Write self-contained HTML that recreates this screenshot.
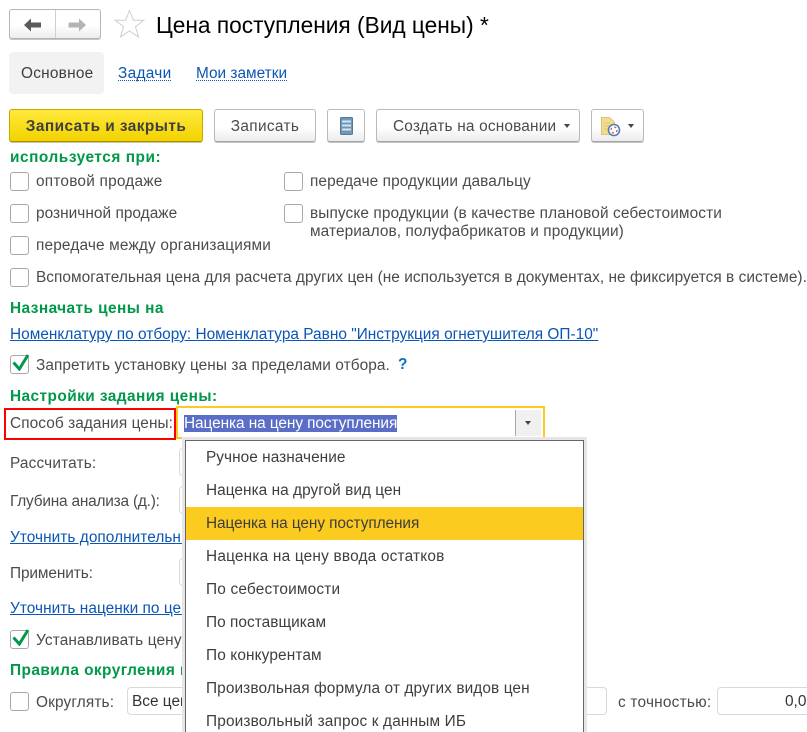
<!DOCTYPE html>
<html lang="ru"><head><meta charset="utf-8"><title>Цена поступления</title>
<style>
html{margin:0;padding:0;background:#fff;width:807px;height:732px;overflow:hidden}
body{margin:0;padding:0;background:#fff;width:807px;height:732px;overflow:hidden;position:relative;font-family:"Liberation Sans",sans-serif;font-size:15.4px;color:#4b4b4b}
.t,.g,.a,.cb,.btn,.f,.m{position:absolute;box-sizing:border-box}
.t{white-space:nowrap;line-height:18px}
.g{white-space:nowrap;line-height:18px;font-weight:bold;color:#00984a;left:10px;letter-spacing:.44px}
.a{white-space:nowrap;line-height:18px;color:#0b55b5;text-decoration:underline}
.cb{width:19px;height:19px;left:10px;border:1px solid #a8a8a8;border-radius:3px;background:#fff}
.btn{height:33px;top:109px;border:1px solid #b9b9b9;border-bottom-color:#a4a4a4;border-radius:3px;background:linear-gradient(#fff,#fff 55%,#ececec);box-shadow:0 1px 0 #c4c4c4;line-height:33px;text-align:center;white-space:nowrap}
.f{border:1px solid #d9d9d9;border-radius:4px;background:#fff;height:28px}
.m{left:186px;width:397px;height:33px;line-height:34px;padding-left:20px;color:#3e3e3e;white-space:nowrap}
.arr{position:absolute;width:0;height:0;border-left:3.5px solid transparent;border-right:3.5px solid transparent;border-top:4px solid #444}
</style></head><body>

<!-- nav -->
<div class="btn" style="left:9px;top:9px;width:92px;height:30px;border-color:#b5b5b5">
<div style="position:absolute;left:45px;top:0;width:1px;height:28px;background:#cfcfcf"></div>
<svg style="position:absolute;left:13px;top:8px" width="20" height="14" viewBox="0 0 20 14"><path d="M1 7L8 .5V4.5H18V9.5H8V13.5Z" fill="#5a5a5a"/></svg>
<svg style="position:absolute;left:57px;top:8px" width="20" height="14" viewBox="0 0 20 14"><path d="M19 7L12 .5V4.5H1.5V9.5H12V13.5Z" fill="#b4b4b4"/></svg>
</div>
<svg style="position:absolute;left:114px;top:9px" width="32" height="30" viewBox="0 0 32 30"><path d="M15.5 1.5L19.4 11.3H29.8L21.4 17.8L24.6 28L15.5 21.9L6.4 28L9.6 17.8L1.2 11.3H11.6Z" fill="#fff" stroke="#ccd0d4" stroke-width="1"/></svg>
<div class="t" style="left:156px;top:10px;font-size:22.7px;line-height:30px;color:#000">Цена поступления (Вид цены) *</div>

<!-- tabs -->
<div style="position:absolute;left:9px;top:52px;width:95px;height:42px;background:#f2f2f2;border-radius:4px"></div>
<div class="t" style="left:21px;top:65px;color:#3e3e3e;letter-spacing:.24px">Основное</div>
<div class="t" style="left:118px;top:65px;color:#0b55b5;border-bottom:1px dotted #0b55b5;line-height:17px;height:16px;letter-spacing:.3px">Задачи</div>
<div class="t" style="left:196px;top:65px;color:#0b55b5;border-bottom:1px dotted #0b55b5;line-height:17px;height:16px;letter-spacing:0">Мои заметки</div>

<!-- toolbar -->
<div class="btn" style="left:9px;width:194px;background:linear-gradient(#ffe93c,#f2d300);border-color:#c4a800;border-bottom-color:#a89000;font-weight:bold;color:#3f3f3f;box-shadow:0 1px 0 #c9c9a0;letter-spacing:.44px">Записать и закрыть</div>
<div class="btn" style="left:214px;width:102px;letter-spacing:.35px">Записать</div>
<div class="btn" style="left:327px;width:38px">
<svg style="position:absolute;left:12px;top:7px" width="13" height="18" viewBox="0 0 13 18"><rect x="0.5" y="0.5" width="12" height="17" rx="1" fill="#6f97b8" stroke="#4f7a9e"/><path d="M2 4.5H11M2 8.5H11M2 12.5H11" stroke="#d7e5ef" stroke-width="2"/></svg>
</div>
<div class="btn" style="left:376px;width:204px;text-align:left;padding-left:16px;letter-spacing:.18px">Создать на основании<span class="arr" style="left:187px;top:14px"></span></div>
<div class="btn" style="left:591px;width:53px">
<svg style="position:absolute;left:9px;top:7px" width="22" height="20" viewBox="0 0 22 20"><path d="M.5 .5H8.5L13.5 5.5V17.5H.5Z" fill="#f2dc8e" stroke="#dcc272"/><path d="M2.5 6H9M2.5 9H9M2.5 12H7" stroke="#e2c677"/><circle cx="13" cy="13" r="5.5" fill="#fff" stroke="#4d7fb3" stroke-width="1.6"/><circle cx="13" cy="13" r="3" fill="none" stroke="#d9534f" stroke-width="1.4" stroke-dasharray="2 2.7"/></svg>
<span class="arr" style="left:36px;top:14px"></span></div>

<!-- uses -->
<div class="g" style="top:149px;letter-spacing:.54px">используется при:</div>
<div class="cb" style="top:172px"></div><div class="t" style="left:36px;top:173px;letter-spacing:.22px">оптовой продаже</div>
<div class="cb" style="top:204px"></div><div class="t" style="left:36px;top:205px;letter-spacing:.04px">розничной продаже</div>
<div class="cb" style="top:236px"></div><div class="t" style="left:36px;top:237px;letter-spacing:.16px">передаче между организациями</div>
<div class="cb" style="top:172px;left:284px"></div><div class="t" style="left:310px;top:173px;letter-spacing:.1px">передаче продукции давальцу</div>
<div class="cb" style="top:204px;left:284px"></div><div class="t" style="left:310px;top:205px;letter-spacing:.11px">выпуске продукции (в качестве плановой себестоимости</div>
<div class="t" style="left:310px;top:223px;letter-spacing:.09px">материалов, полуфабрикатов и продукции)</div>
<div class="cb" style="top:268px"></div><div class="t" style="left:36px;top:269px;letter-spacing:.04px">Вспомогательная цена для расчета других цен (не используется в документах, не фиксируется в системе).</div>

<div class="g" style="top:300px">Назначать цены на</div>
<div class="a" style="left:10px;top:326px;letter-spacing:.02px">Номенклатуру по отбору: Номенклатура Равно "Инструкция огнетушителя ОП-10"</div>
<div class="cb" style="top:355px"></div>
<svg style="position:absolute;left:12px;top:353px" width="18" height="18" viewBox="0 0 18 18"><path d="M1.5 9.5L7.3 16L16 2" fill="none" stroke="#00984a" stroke-width="3"/></svg>
<div class="t" style="left:36px;top:357px;letter-spacing:.07px">Запретить установку цены за пределами отбора.</div>
<div class="t" style="left:398px;top:356px;color:#0b6fc0;font-weight:bold">?</div>

<div class="g" style="top:388px">Настройки задания цены:</div>
<div style="position:absolute;left:176px;top:406px;width:369px;height:33px;border:2px solid #fbcb1f;box-sizing:border-box;background:#fff"></div>
<div style="position:absolute;left:4px;top:408px;width:172px;height:32px;border:2px solid #f00;box-sizing:border-box"></div>
<div class="t" style="left:10px;top:415px;letter-spacing:.08px">Способ задания цены:</div>
<div class="t" style="left:184px;top:415px;height:17px;background:#5b6ec7;color:#fff;line-height:17px;letter-spacing:-.07px">Наценка на цену поступления</div>
<div style="position:absolute;left:515px;top:410px;width:26px;height:26px;background:#f0f0f0;border-left:1px solid #a8a8a8;box-sizing:border-box"><span class="arr" style="left:9px;top:11px"></span></div>

<div class="t" style="left:10px;top:455px;letter-spacing:.16px">Рассчитать:</div>
<div class="f" style="left:179px;top:448px;width:30px"></div>
<div class="t" style="left:10px;top:493px;letter-spacing:-.2px">Глубина анализа (д.):</div>
<div class="f" style="left:179px;top:486px;width:30px"></div>
<div class="a" style="left:10px;top:529px;letter-spacing:.05px">Уточнить дополнительные</div>
<div class="t" style="left:10px;top:565px;letter-spacing:-.1px">Применить:</div>
<div class="f" style="left:179px;top:558px;width:30px"></div>
<div class="a" style="left:10px;top:600px;letter-spacing:.05px">Уточнить наценки по ценовым</div>
<div class="cb" style="top:630px"></div>
<svg style="position:absolute;left:12px;top:628px" width="18" height="18" viewBox="0 0 18 18"><path d="M1.5 9.5L7.3 16L16 2" fill="none" stroke="#00984a" stroke-width="3"/></svg>
<div class="t" style="left:36px;top:632px;letter-spacing:.13px">Устанавливать цену</div>
<div class="g" style="top:662px">Правила округления цен</div>
<div class="cb" style="top:692px"></div>
<div class="t" style="left:36px;top:694px;letter-spacing:.14px">Округлять:</div>
<div class="f" style="left:127px;top:687px;width:480px;color:#333;line-height:28px;padding-left:4px">Все цены</div>
<div class="t" style="left:618px;top:694px;letter-spacing:.22px">с точностью:</div>
<div class="f" style="left:717px;top:687px;width:100px;color:#333;line-height:28px;padding-left:67px">0,00</div>

<!-- dropdown -->
<div style="position:absolute;left:185px;top:440px;width:399px;height:292px;background:#fff;border:1px solid #666;border-bottom:0;box-sizing:border-box;box-shadow:0 0 0 3px #e6e6e6"></div>
<div class="m" style="top:441px;letter-spacing:.04px">Ручное назначение</div>
<div class="m" style="top:474px;letter-spacing:.04px">Наценка на другой вид цен</div>
<div class="m" style="top:507px;background:#fbcb1f;letter-spacing:-.07px">Наценка на цену поступления</div>
<div class="m" style="top:540px;letter-spacing:.2px">Наценка на цену ввода остатков</div>
<div class="m" style="top:573px;letter-spacing:.18px">По себестоимости</div>
<div class="m" style="top:606px;letter-spacing:.04px">По поставщикам</div>
<div class="m" style="top:639px;letter-spacing:.13px">По конкурентам</div>
<div class="m" style="top:672px;letter-spacing:.1px">Произвольная формула от других видов цен</div>
<div class="m" style="top:705px;letter-spacing:.16px">Произвольный запрос к данным ИБ</div>
</body></html>
